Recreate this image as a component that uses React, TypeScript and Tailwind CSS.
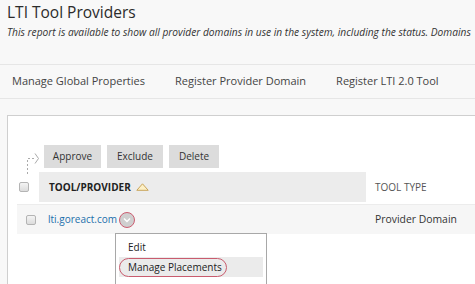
export default function App() {
  return (
    <div className="h-[284px] w-[475px] overflow-hidden bg-[#f8f8f8] font-['Open_Sans',sans-serif] text-[#333]">
      {/* Page title */}
      <div className="pl-[7px] pt-[1px]">
        <h1 className="text-[15.5px] leading-[23px] text-[#2b2b2b]">LTI Tool Providers</h1>
        <p className="mt-[1px] whitespace-nowrap text-[10.2px] italic leading-[14px] text-[#333]">
          This report is available to show all provider domains in use in the system, including the status. Domains
        </p>
      </div>

      {/* Action bar */}
      <nav className="mt-[25px] flex h-[35px] items-center gap-[30px] border-y border-[#e6e6e6] pl-[12px] text-[11px] text-[#444] whitespace-nowrap">
        <span>Manage Global Properties</span>
        <span>Register Provider Domain</span>
        <span>Register LTI 2.0 Tool</span>
      </nav>

      {/* Content panel */}
      <div className="ml-[7px] mt-[16px] h-[200px] border-l border-t border-[#cfcfcf] bg-white pt-[29px]">
        <div className="flex h-[23px] pl-[18px]">
          <svg className="mt-[5px] h-[25px] w-[14px] shrink-0" viewBox="0 0 14 25" fill="none" stroke="#aaa" strokeWidth="1">
            <path d="M1.5 24V8.5H10" strokeDasharray="2 2" />
            <path d="M9 3.5l3.5 5-3.5 5" />
          </svg>
          <div className="ml-[4px] flex gap-[6px] text-[10px] text-[#333]">
            <button className="h-[23px] w-[57px] bg-[#dcdcdc]">Approve</button>
            <button className="h-[23px] w-[56px] bg-[#dcdcdc]">Exclude</button>
            <button className="h-[23px] w-[50px] bg-[#dcdcdc]">Delete</button>
          </div>
        </div>

        {/* Table */}
        <div className="ml-[9px] mt-[4px]">
          <div className="flex h-[32px]">
            <div className="flex h-[30px] w-[22px] shrink-0 items-center">
              <Checkbox className="ml-[2px]" />
            </div>
            <div className="flex h-[30px] w-[327px] shrink-0 items-center bg-[#ececec] pl-[10px]">
              <span className="text-[10px] font-bold text-[#222]">TOOL/PROVIDER</span>
              <svg className="ml-[5px] h-[8px] w-[13px]" viewBox="0 0 13 8">
                <path d="M6.5 0.8L12.2 7.3H0.8Z" fill="#fdf0c6" stroke="#c9a45a" strokeWidth="1" />
              </svg>
            </div>
            <div className="flex h-[30px] items-center pl-[9px] text-[10px] text-[#555] whitespace-nowrap">TOOL TYPE</div>
          </div>
          <div className="flex h-[30px] items-center border-t border-[#ececec] bg-[#f6f6f6] text-[10.4px]">
            <div className="w-[22px] shrink-0">
              <Checkbox className="ml-[9px]" />
            </div>
            <div className="flex w-[327px] shrink-0 items-center pl-[9px]">
              <a className="text-[10px] text-[#1b6fab]">lti.goreact.com</a>
              <span className="ml-[2px] flex h-[16px] w-[16px] items-center justify-center rounded-full border-[1.5px] border-[#cc5d71] bg-[#cfcfcf]">
                <svg className="h-[6px] w-[8px]" viewBox="0 0 8 6" fill="none" stroke="#fff" strokeWidth="1.4">
                  <path d="M1 1.5l3 3 3-3" />
                </svg>
              </span>
            </div>
            <span className="pl-[9px] text-[#333] whitespace-nowrap">Provider Domain</span>
          </div>

          {/* Context menu */}
          <div className="relative">
            <div className="absolute left-[98px] top-[-1px] h-[60px] w-[152px] border border-[#a8a8a8] bg-white px-[3px] pt-[4px] text-[10px] text-[#222] whitespace-nowrap">
              <div className="h-[19px] pl-[9px] leading-[19px]">Edit</div>
              <div className="flex h-[20px] items-center bg-[#ebebeb]">
                <span className="flex h-[19px] w-[108px] items-center rounded-full border-[1.5px] border-[#c95c6e] pl-[8px]">
                  Manage Placements
                </span>
              </div>
            </div>
          </div>
        </div>
      </div>
    </div>
  );
}

function Checkbox({ className = "" }: { className?: string }) {
  return (
    <span
      className={
        "block h-[10px] w-[10px] rounded-[2px] border border-[#b4b4b4] bg-gradient-to-b from-[#f4f4f4] to-[#dcdcdc] " +
        className
      }
    />
  );
}
